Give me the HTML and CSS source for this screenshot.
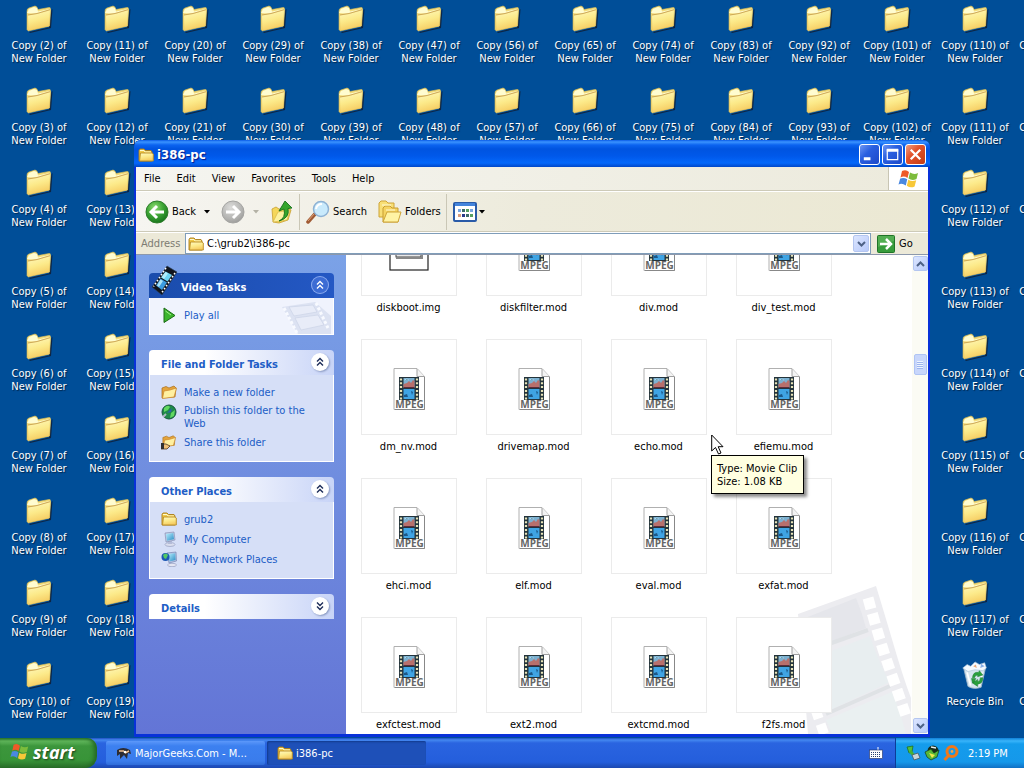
FILE: index.html
```html
<!DOCTYPE html>
<html lang="en">
<head>
<meta charset="utf-8">
<title>i386-pc</title>
<link rel="stylesheet" href="styles.css">
</head>
<body>
<svg class="defs" aria-hidden="true">
  <defs>
    <linearGradient id="gFold" x1="0" y1="0" x2="0.3" y2="1"><stop offset="0" stop-color="#fffac4"/><stop offset="0.55" stop-color="#fcea8a"/><stop offset="1" stop-color="#f6cc62"/></linearGradient>
    <radialGradient id="gGreen" cx="0.4" cy="0.3" r="0.75"><stop offset="0" stop-color="#8fdc72"/><stop offset="0.5" stop-color="#3da535"/><stop offset="1" stop-color="#14701a"/></radialGradient>
    <radialGradient id="gGray" cx="0.4" cy="0.3" r="0.75"><stop offset="0" stop-color="#dcdcda"/><stop offset="0.7" stop-color="#b2b2b0"/><stop offset="1" stop-color="#9a9a98"/></radialGradient>
    <linearGradient id="gScreen" x1="0" y1="0" x2="1" y2="1"><stop offset="0" stop-color="#b8f0ff"/><stop offset="1" stop-color="#2c8cc4"/></linearGradient>
  </defs>
  <symbol id="folder-big" viewBox="0 0 28 28">
    <path d="M4 27 L24 22.500 L26.500 5 L27.500 4 L26 23 L5 28Z" fill="#101c30" opacity=".8"/>
    <path d="M2 25 V6 Q2 3.500 4 3 L10 1 Q12 1 13 4.500 L24 2.500 Q25.500 2 25.500 4 L24 21Z" fill="#f3dc7c" stroke="#d8bc58" stroke-width=".6"/>
    <path d="M2 8 L4 4 L9 2 L12 3 L13 6.500 L25 4 V7 L12 9Z" fill="#fffcd0"/>
    <path d="M2.500 10 L12 8.500 L25.500 4.500 L24.500 21 L3 26Z" fill="url(#gFold)" stroke="#e5c55e" stroke-width=".6"/>
    <path d="M3 10 L12 8.500 L25 4.700" stroke="#b88c40" stroke-width=".6" fill="none"/>
  </symbol>
  <symbol id="folder" viewBox="0 0 16 16">
    <path d="M1 14 V3.500 L2 2 H6 L7.500 3.500 H13 L14 5 V14Z" fill="#f0c948" stroke="#a87a18" stroke-width=".9"/>
    <path d="M2 3.500 H6 L7 5 H13" stroke="#fffbd0" fill="none"/>
    <path d="M1.500 14 L2.500 6 H14 L15.300 7 V14Z" fill="url(#gFold)" stroke="#b98c24" stroke-width=".9"/>
  </symbol>
  <symbol id="folder-open" viewBox="0 0 16 16">
    <path d="M1 14 L1 4 L5 2.500 L8 4 L13 2 L15 4 L14 13Z" fill="#e4a43c" stroke="#a86c18" stroke-width=".7"/>
    <path d="M1.500 14.500 L3 7 L9 6 L15.500 4 L13 13Z" fill="#fff0a0" stroke="#c8842a" stroke-width=".7"/>
  </symbol>
  <symbol id="back" viewBox="0 0 24 24">
    <circle cx="12" cy="12" r="11" fill="url(#gGreen)" stroke="#2f7d2c"/>
    <path d="M19 12 H7 M12 6 L6 12 L12 18" fill="none" stroke="#fff" stroke-width="3"/>
  </symbol>
  <symbol id="fwd" viewBox="0 0 24 24">
    <circle cx="12" cy="12" r="11" fill="url(#gGray)" stroke="#a4a4a2"/>
    <path d="M5 12 H17 M12 6 L18 12 L12 18" fill="none" stroke="#fff" stroke-width="3"/>
  </symbol>
  <symbol id="up" viewBox="0 0 22 24">
    <path d="M2 22 L1 9 L5 7 L8 9 L17 8 L20 10 L17 20 L8 23Z" fill="#f5d75a" stroke="#c8a030" stroke-width=".8"/>
    <path d="M2 22 L7 12 L19 10 L16 20Z" fill="#fdf2a0" stroke="#d2b040" stroke-width=".6"/>
    <path d="M8 21 Q15 18 13 9 L8 11 L14 1 L21 8 L17 8.500 Q19 18 8 21Z" fill="#35a52c" stroke="#17701a" stroke-width=".9"/>
  </symbol>
  <symbol id="search" viewBox="0 0 24 24">
    <path d="M2 22 L9 14" stroke="#a05a34" stroke-width="3.500" stroke-linecap="round"/><path d="M2 21 L8 14" stroke="#dca078"/>
    <circle cx="15" cy="9" r="7.500" fill="#c9eafc" stroke="#8eb2d4" stroke-width="1.500"/>
    <path d="M10 9 Q11 4 16 4" stroke="#fff" stroke-width="2" fill="none"/>
  </symbol>
  <symbol id="folders" viewBox="0 0 24 24">
    <path d="M1 17 V3 L3 1 H8 L10 3 H16 V17Z" fill="#f8df76" stroke="#cda438"/>
    <path d="M5 22 V8 L7 6 H12 L14 8 H20 V22Z" fill="#f5d462" stroke="#c89c30"/>
    <path d="M5 22 L9 12 H23 L20 22Z" fill="#fff3a4" stroke="#cda438"/>
    <path d="M4 5 H13 M8 10 H17" stroke="#fffbd8"/>
  </symbol>
  <symbol id="views" viewBox="0 0 24 20">
    <rect x="1" y="1" width="22" height="18" rx="1" fill="#fff" stroke="#2a5ba8" stroke-width="2"/><path d="M2 2.500 H22" stroke="#4384dc" stroke-width="3"/>
    <path d="M5 7h3v3h-3z M17 7h3v3h-3z" fill="#78a6e0"/><path d="M9 7h3v3h-3z M13 12h3v3h-3z" fill="#3d6a68"/><path d="M13 7h3v3h-3z M17 12h3v3h-3z" fill="#56a060"/><path d="M5 12h3v3h-3z" fill="#d89c7c"/><path d="M9 12h3v3h-3z" fill="#283888"/>
  </symbol>
  <symbol id="flag" viewBox="0 0 22 20">
    <path d="M4 2 Q8 0 11 3 L9.500 9 Q6 6.500 2.500 8.500Z" fill="#ee5a28"/>
    <path d="M12 3.500 Q16 6 20 4 L18.500 10 Q14 12 10.500 9.500Z" fill="#7cbc3c"/>
    <path d="M2.200 9.500 Q6 8 9.200 10.300 L7.800 16.500 Q4 13.500 .5 15.500Z" fill="#4a88e0"/>
    <path d="M10.300 10.700 Q14 13 18.200 11.200 L16.600 17.500 Q12.500 19.500 8.800 16.800Z" fill="#f8c838"/>
  </symbol>
  <symbol id="go" viewBox="0 0 18 18">
    <rect x=".5" y=".5" width="17" height="17" rx="1" fill="#389c3c" stroke="#1f7428"/><path d="M1 1 H17 V6 L1 12Z" fill="#6cc068" opacity=".5"/>
    <path d="M3 9 H13 M9 4 L14 9 L9 14" fill="none" stroke="#fff" stroke-width="2.500"/>
  </symbol>
  <symbol id="chev-down" viewBox="0 0 9 6"><path d="M1 1 L4.500 4.500 L8 1" fill="none" stroke="#4d6185" stroke-width="2"/></symbol>
  <symbol id="chev-up" viewBox="0 0 9 6"><path d="M1 5 L4.500 1.500 L8 5" fill="none" stroke="#4d6185" stroke-width="2"/></symbol>
  <symbol id="tri" viewBox="0 0 6 4"><path d="M0 0 H6 L3 3.500Z" fill="currentColor"/></symbol>
  <symbol id="dbl-up" viewBox="0 0 18 18"><path d="M6 8.500 L9 5.500 L12 8.500 M6 12.500 L9 9.500 L12 12.500" fill="none" stroke="currentColor" stroke-width="1.400"/></symbol>
  <symbol id="dbl-down" viewBox="0 0 18 18"><path d="M6 5.500 L9 8.500 L12 5.500 M6 9.500 L9 12.500 L12 9.500" fill="none" stroke="currentColor" stroke-width="1.400"/></symbol>
  <symbol id="film" viewBox="0 0 28 32">
    <path d="M17 1 L27 7 L12 30 L2 22Z" fill="#10141c" stroke="#28405c" stroke-width=".6"/>
    <path d="M15.500 6.500 L22 10 L17.500 16.500 L11 12.500Z" fill="#6cd4f4"/><path d="M10.500 13.500 L17 17.500 L12 25 L6 20.500Z" fill="#3c9ce0"/>
    <path d="M11.500 12 L15.500 7 L18 8.500 L14 14Z M7 20.500 L10.500 14.500 L13 16 L9 22Z" fill="#c4f4fc" opacity=".8"/>
    <path d="M16 3 L3.500 21.500" stroke="#fff" stroke-width="1.600" stroke-dasharray="1.600 2"/><path d="M25 8 L12 27.500" stroke="#fff" stroke-width="1.600" stroke-dasharray="1.600 2"/>
  </symbol>
  <symbol id="play" viewBox="0 0 16 16"><path d="M3 1 L14 8.500 L3 15.500Z" fill="#3cb52c" stroke="#1a6a14"/><path d="M4.500 4 L10 8" stroke="#a0ec88"/></symbol>
  <symbol id="globe" viewBox="0 0 16 16">
    <circle cx="8" cy="8" r="7" fill="#1f8a48" stroke="#14553c"/><path d="M3 4 Q7 0 9 3 L7 6 L3 8Z M10 9 L14 6 L13 12 L9 14Z" fill="#62d860"/><path d="M6 9 L11 4 L10 8Z" fill="#2c60b0"/><path d="M2 13 L5 10" stroke="#b0b8c8" stroke-width="2"/>
  </symbol>
  <symbol id="share" viewBox="0 0 16 16"><use href="#folder-open" width="16" height="14"/><path d="M0 15 L1 10 L5 10 L9 12 L6 15Z" fill="#f0c078" stroke="#50381c" stroke-width=".8"/><path d="M0 9 H3 V15 H0Z" fill="#303030"/></symbol>
  <symbol id="computer" viewBox="0 0 16 16">
    <ellipse cx="9" cy="13.500" rx="5" ry="2" fill="#dadeee" stroke="#8a94b8" stroke-width=".6"/><path d="M7 10 H11 V13 H7Z" fill="#b4bcd8"/>
    <path d="M4 2 L13 1 L14 9 L5 11Z" fill="#c4cce4" stroke="#7a86ac" stroke-width=".6"/><path d="M5 3 L12.300 2 L13 8.300 L6 9.800Z" fill="url(#gScreen)"/>
  </symbol>
  <symbol id="network" viewBox="0 0 16 16">
    <ellipse cx="11" cy="14" rx="4.500" ry="1.700" fill="#e4e6f2" stroke="#8a94b8" stroke-width=".6"/>
    <path d="M6 2 L15 1 L15.500 10 L8 12Z" fill="#b8c4e4" stroke="#6c7aa8" stroke-width=".6"/><path d="M7 3 L14.200 2.200 L14.600 9 L8.500 10.600Z" fill="url(#gScreen)"/>
    <circle cx="4.500" cy="6" r="4" fill="#1c58b4"/><path d="M2 4 Q5 1 7 4 L5 8 L3 7Z" fill="#52c864"/>
  </symbol>
  <symbol id="mpeg" viewBox="0 0 32 42">
    <path d="M1 .5 H24 L31.500 8.500 V41.500 H1Z" fill="#fff" stroke="#b0b0b0"/><path d="M2 41.500 H31.500 V9" stroke="#888" fill="none"/>
    <path d="M24 1 V8.500 H31.500" fill="#f3f3f3" stroke="#a0a0a0"/>
    <rect x="6" y="9" width="20" height="23" fill="#24343c"/>
    <path d="M8 10.500 V32 M24 10.500 V32" stroke="#e8e4b8" stroke-width="2.200" stroke-dasharray="2 1.800"/>
    <rect x="10.500" y="10" width="11" height="10" fill="#7cb0d0"/><path d="M10.500 19 V16 L14 15 L16 13 L18 15 L20 12 L21.500 13 V19Z" fill="#b8706c"/><path d="M11 12 L14 11 L16 12" stroke="#a8dcf4"/>
    <path d="M10.500 19.500 H21.500" stroke="#5c2c3c"/>
    <rect x="10.500" y="21" width="11" height="10" fill="#3fa4e4"/><path d="M11 27 L14 26 L15 29 H11Z M18 23 L20 24 L19 27Z" fill="#1c5888"/>
    <text x="16.500" y="40" text-anchor="middle" class="mpeg-text">MPEG</text>
  </symbol>
  <symbol id="img" viewBox="0 0 40 42">
    <rect x="1" y="1" width="38" height="40" fill="#fff" stroke="#222" stroke-width="1.200"/><rect x="7" y="16" width="25" height="12" fill="#e8e8e8" stroke="#444"/>
    <path d="M11 23 h4 v3 h-4z M18 23 h4 v3 h-4z M25 23 h4 v3 h-4z" fill="#111"/><path d="M7 29 H33 V18" stroke="#888" fill="none" stroke-width="2"/>
  </symbol>
  <symbol id="bin" viewBox="0 0 30 32">
    <path d="M2 8 L27 8 L22 30 Q14 33 7 29Z" fill="#d4e4ee" stroke="#9ab4c8"/>
    <path d="M1 8 L6 4 L10 6 L15 1 L20 4 L26 2 L28 8 L24 11 L15 10 L7 12Z" fill="#f4faff" stroke="#a8c0d8" stroke-width=".7"/>
    <path d="M13 6 L16 4 L17 8Z" fill="#e8a878"/><path d="M22 3 L26 6 L21 8Z" fill="#88b0e8"/><path d="M6 13 L10 28 M23 13 L20 28" stroke="#fff" stroke-width="2"/>
    <path d="M12 19 Q13 12 19 13 L20 11 L24 16 L18 18 L18 16 Q15 16 14.500 19Z M24 19 Q24 26 18 26.500 L18 29 L12 25 L18 21 L18 23.500 Q21 23 21 19Z M11 20 L16 20 L14 24 L12 25Z" fill="#2aa03c" stroke="#187830" stroke-width=".5"/>
  </symbol>
</svg>

<main class="desktop">
  <div class="icons" id="icons"></div>

  <section class="window" aria-label="i386-pc">
    <header class="titlebar">
      <svg class="i16"><use href="#folder"/></svg>
      <h1 class="title">i386-pc</h1>
      <button class="cap" aria-label="Minimize"><svg viewBox="0 0 20 20"><path d="M4 14.500 H11" stroke="#fff" stroke-width="3"/></svg></button>
      <button class="cap" aria-label="Maximize"><svg viewBox="0 0 20 20"><path d="M4.500 5 H15.500 V15.500 H4.500Z" fill="none" stroke="#fff" stroke-width="1.300"/><path d="M4 5.500 H16" stroke="#fff" stroke-width="3"/></svg></button>
      <button class="cap close" aria-label="Close"><svg viewBox="0 0 20 20"><path d="M5 5 L15 15 M15 5 L5 15" stroke="#fff" stroke-width="2.400"/></svg></button>
    </header>
    <div class="client">
      <nav class="menubar">
        <button>File</button><button>Edit</button><button>View</button><button>Favorites</button><button>Tools</button><button>Help</button>
        <span class="throbber"><svg><use href="#flag"/></svg></span>
      </nav>
      <div class="toolbar">
        <button class="tool"><svg class="i24"><use href="#back"/></svg>Back<svg class="tri"><use href="#tri"/></svg></button>
        <button class="tool off" aria-label="Forward"><svg class="i24"><use href="#fwd"/></svg><svg class="tri"><use href="#tri"/></svg></button>
        <button class="tool" aria-label="Up"><svg class="i24"><use href="#up"/></svg></button>
        <span class="sep"></span>
        <button class="tool"><svg class="i24"><use href="#search"/></svg>Search</button>
        <button class="tool"><svg class="i24"><use href="#folders"/></svg>Folders</button>
        <span class="sep"></span>
        <button class="tool views" aria-label="Views"><svg class="i24"><use href="#views"/></svg><svg class="tri"><use href="#tri"/></svg></button>
      </div>
      <div class="address">
        <label for="addr">Address</label>
        <div class="combo">
          <svg class="i16"><use href="#folder"/></svg>
          <input id="addr" type="text" value="C:\grub2\i386-pc">
          <button class="chip" aria-label="Show addresses"><svg class="chev"><use href="#chev-down"/></svg></button>
        </div>
        <button class="go"><svg><use href="#go"/></svg>Go</button>
      </div>
      <div class="body">
        <aside class="side">
          <section class="group primary">
            <svg class="film"><use href="#film"/></svg>
            <h2><span>Video Tasks</span><button aria-label="Collapse Video Tasks"><svg><use href="#dbl-up"/></svg></button></h2>
            <div class="tasks">
              <svg class="strip" viewBox="0 0 52 32"><path d="M1 5 L34 0 L50 14 V32 H17Z" fill="#dce2f2"/><path d="M3 6 L16 31 M35 1 L47 26" stroke="#f8faff" stroke-width="3" stroke-dasharray="3 2"/><path d="M8 5 L32 3 L36 10 L13 14Z M14 16 L37 13 L43 23 L20 28Z" fill="#e8ecf8" stroke="#c8d0e4" stroke-width=".6"/></svg>
              <a href="#"><svg><use href="#play"/></svg><span>Play all</span></a>
            </div>
          </section>
          <section class="group">
            <h2><span>File and Folder Tasks</span><button aria-label="Collapse File and Folder Tasks"><svg><use href="#dbl-up"/></svg></button></h2>
            <div class="tasks">
              <a href="#"><svg><use href="#folder-open"/></svg><span>Make a new folder</span></a>
              <a href="#"><svg><use href="#globe"/></svg><span>Publish this folder to the Web</span></a>
              <a href="#"><svg><use href="#share"/></svg><span>Share this folder</span></a>
            </div>
          </section>
          <section class="group">
            <h2><span>Other Places</span><button aria-label="Collapse Other Places"><svg><use href="#dbl-up"/></svg></button></h2>
            <div class="tasks">
              <a href="#"><svg><use href="#folder"/></svg><span>grub2</span></a>
              <a href="#"><svg><use href="#computer"/></svg><span>My Computer</span></a>
              <a href="#"><svg><use href="#network"/></svg><span>My Network Places</span></a>
            </div>
          </section>
          <section class="group">
            <h2><span>Details</span><button aria-label="Expand Details"><svg><use href="#dbl-down"/></svg></button></h2>
          </section>
        </aside>
        <div class="view">
          <svg class="watermark" viewBox="0 0 120 148" aria-hidden="true">
            <path d="M6 28 L84 0 Q92 26 102 60 T119 112 V148 H16Z" fill="#ececf0"/>
            <path d="M8 34 L64 12 Q70 26 74 42 L18 64Z" fill="#e5e6eb"/>
            <path d="M21 72 L78 50 Q88 80 98 96 L34 126Z" fill="#e8eef0"/>
            <path d="M34 134 L100 106 Q108 124 114 148 H40Z" fill="#eaf0f1"/>
            <path d="M20 64 L76 44 M34 128 L98 100" stroke="#dfe2e5" stroke-width="4"/>
            <path d="M76 12 Q88 56 98 84 T114 130" fill="none" stroke="#fff" stroke-width="11" stroke-dasharray="11 5"/>
            <path d="M12 90 L32 148" fill="none" stroke="#fff" stroke-width="10" stroke-dasharray="11 6"/>
          </svg>
          <div class="files" id="files"></div>
        </div>
        <div class="scroll">
          <button class="chip" aria-label="Scroll up"><svg class="chev"><use href="#chev-up"/></svg></button>
          <div class="track"><div class="thumb"></div></div>
          <button class="chip" aria-label="Scroll down"><svg class="chev"><use href="#chev-down"/></svg></button>
        </div>
      </div>
    </div>
  </section>

  <div class="tooltip" role="tooltip">Type: Movie Clip<br>Size: 1.08 KB</div>
  <svg class="cursor" viewBox="0 0 13 21"><path d="M.7 1 V17 L4.500 13.500 L7.500 20 L10 19 L7.200 12.700 H12Z" fill="#fff" stroke="#000"/></svg>
</main>

<footer class="taskbar">
  <button class="start"><svg><use href="#flag"/></svg>start</button>
  <button class="task">
    <svg class="i16" viewBox="0 0 16 16"><path d="M1 5 Q7 1 14 5 L15 9 L12 8 L11 14 L8 10 L4 14 V9 L1 11Z" fill="#2c2c34"/><path d="M3 6 H8 M9 8 L13 6" stroke="#f0c090" stroke-width="1.500"/><circle cx="9" cy="7" r="1.300" fill="#fff"/></svg>
    MajorGeeks.Com - M...</button>
  <button class="task active"><svg class="i16"><use href="#folder"/></svg>i386-pc</button>
  <svg class="kbd" viewBox="0 0 14 12"><path d="M9 0 V3" stroke="#fff"/><rect x=".5" y="3" width="13" height="8.500" fill="#fff" stroke="#203060" stroke-width=".6"/><path d="M2 5.500 H12 M2 7.500 H12 M2 9.500 H12" stroke="#26406e" stroke-dasharray="1 1"/></svg>
  <div class="tray">
    <svg class="i16" viewBox="0 0 16 16"><path d="M2 2 L8 1 L7 7 L4 8Z" fill="#52c03c" stroke="#1c6818" stroke-width=".7"/><path d="M5 6 L11 13" stroke="#48b034" stroke-width="3"/><path d="M7 10 L13 8 L15 13 L9 15Z" fill="#c8d4d8" stroke="#485860" stroke-width=".8"/></svg>
    <svg class="i16" viewBox="0 0 16 16"><circle cx="9" cy="6" r="5.500" fill="#172c1c"/><path d="M1 7 L7 4 L10 8 L15 5 L13 12 L7 15 L3 12Z" fill="#58b838" stroke="#123818" stroke-width=".7"/><path d="M5 8 L11 10 L8 13Z" fill="#f4e84c"/><path d="M7 2 L12 3" stroke="#e8f0f0" stroke-width="1.500"/></svg>
    <svg class="i16" viewBox="0 0 16 16"><circle cx="9" cy="6.500" r="5" fill="none" stroke="#f07818" stroke-width="3"/><path d="M6 10 L1.500 15" stroke="#f07818" stroke-width="3"/><circle cx="9" cy="6.500" r="1.400" fill="#f8a040"/></svg>
    <time>2:19 PM</time>
  </div>
</footer>
<script src="script.js"></script>
</body>
</html>
```

FILE: styles.css
```css
* { box-sizing: border-box; }
html, body { height: 100%; }
body {
  margin: 0;
  display: flex;
  flex-direction: column;
  overflow: hidden;
  background: #004e98;
  color: #000;
  font: 11px/13px "DejaVu Sans Condensed", "Noto Sans", sans-serif;
}
button { border: 0; padding: 0; background: none; font: inherit; color: inherit; display: flex; align-items: center; }
a { color: inherit; text-decoration: none; }
svg { display: block; flex: none; }
.defs { position: absolute; width: 0; height: 0; }
.i16 { width: 16px; height: 16px; }
.i24 { width: 24px; height: 24px; }
.mpeg-text { font: bold 10px "Open Sans", sans-serif; fill: #666; }

.desktop { position: relative; flex: 1; min-height: 0; overflow: hidden; }
.icons { display: grid; grid-template-columns: repeat(14, 78px); grid-template-rows: repeat(9, 82px); }
.shortcut { display: flex; flex-direction: column; align-items: center; gap: 6px; padding-top: 5px; color: #fff; text-align: center; text-shadow: 1px 1px 1px #00264c; }
.shortcut svg { width: 28px; height: 28px; }
.shortcut span { width: 70px; white-space: nowrap; }

.window {
  position: absolute;
  inset: 140px 94px 1px 134px;
  display: flex;
  flex-direction: column;
  padding: 0 2px 3px;
  background: #0831d9;
  border-radius: 7px 7px 0 0;
  overflow: hidden;
}
.titlebar {
  display: flex;
  align-items: center;
  gap: 2px;
  height: 27px;
  flex: none;
  margin: 0 -2px;
  padding: 2px 4px 0 4px;
  background: linear-gradient(#0a5be8 0, #3a93ff 2px, #0b63f0 5px, #0054e0 9px, #0058ea 16px, #0468fa 23px, #0047c8 27px);
}
.title { flex: 1; margin: 0; padding-left: 1px; font: bold 13px/16px "DejaVu Sans Condensed", sans-serif; color: #fff; text-shadow: 1px 1px 1px #0a1883; }
.cap { width: 21px; height: 21px; border: 1px solid #fff; border-radius: 3px; background: linear-gradient(135deg, #6f97f4, #2a5fe0 40%, #1c48c8); }
.cap svg { width: 19px; height: 19px; }
.close { background: linear-gradient(135deg, #f0a084, #e2532c 40%, #c43c14); }
.client { flex: 1; min-height: 0; display: flex; flex-direction: column; background: #ece9d8; }

.menubar { display: flex; height: 24px; flex: none; background: linear-gradient(90deg, #f5f5f0, #eceadc); border-bottom: 1px solid #cdcab8; }
.menubar button { padding: 0 8px; }
.throbber { margin-left: auto; width: 40px; display: flex; align-items: center; justify-content: center; background: #fff; border-left: 1px solid #c8c5b4; }
.throbber svg { width: 22px; height: 20px; }

.toolbar { display: flex; align-items: center; height: 41px; flex: none; padding: 0 9px; border-top: 1px solid #fff; border-bottom: 1px solid #cdcab8; background: linear-gradient(90deg, #f6f5f1, #edebdc 50%, #ebe8d3); }
.tool { gap: 3px; margin-right: 11px; }
.tri { width: 6px; height: 4px; margin-left: 5px; }
.off { color: #b4b2a6; }
.sep { width: 1px; height: 36px; background: #cac7b6; margin: 0 6px 0 -6px; }
.views { gap: 0; }
.views .tri { margin-left: 2px; }

.address { display: flex; align-items: center; height: 22px; flex: none; padding: 0 0 0 5px; border-top: 1px solid #fff; background: #ece9d8; }
.address label { width: 44px; color: #7c7b72; }
.combo { flex: 1; min-width: 0; display: flex; align-items: center; height: 21px; padding: 1px 1px 1px 2px; background: #fff; border: 1px solid #7f9db9; }
.combo input { flex: 1; min-width: 0; border: 0; padding: 0 3px; background: none; font: inherit; outline: none; }
.chip { width: 15px; height: 15px; flex: none; justify-content: center; border: 1px solid #b4c6f0; border-radius: 2px; background: linear-gradient(135deg, #dce6ff, #b8cafa); }
.combo .chip { height: 17px; width: 16px; }
.chev { width: 9px; height: 6px; }
.go { gap: 4px; width: 57px; padding-left: 6px; }
.go svg { width: 18px; height: 18px; }

.body { flex: 1; min-height: 0; display: flex; background: #fff; border-top: 1px solid #8c98ac; }
.side { width: 210px; flex: none; display: flex; flex-direction: column; gap: 15px; padding: 18px 12px 18px 13px; overflow: hidden; background: linear-gradient(#7ba2e7, #6375d6); }
.group { position: relative; }
.group h2 { display: flex; align-items: center; justify-content: space-between; height: 25px; margin: 0; padding: 0 5px 0 12px; border-radius: 4px 4px 0 0; font: bold 11px/13px "DejaVu Sans Condensed", sans-serif; color: #215dc6; background: linear-gradient(90deg, #fff 30%, #c8d4f7); }
.group h2 span { padding-top: 3px; }
.group h2 button { width: 18px; height: 18px; border-radius: 50%; color: #1c2c58; background: #fff; box-shadow: 1px 1px 2px #8898c0; margin-bottom: 2px; }
.group h2 svg { width: 18px; height: 18px; }
.primary h2 { padding-left: 32px; color: #fff; background: linear-gradient(90deg, #1a4cac, #2458c4); }
.primary h2 button { color: #fff; background: #3c6cd4; box-shadow: inset 0 0 0 1px #88a8ec; }
.film { position: absolute; left: 1px; top: -8px; width: 28px; height: 32px; }
.tasks { position: relative; display: flex; flex-direction: column; gap: 4px; padding: 9px 11px 11px; border: solid #fff; border-width: 0 1px 1px; background: #d6dff7; color: #215dc6; }
.tasks a { position: relative; display: flex; align-items: center; gap: 7px; }
.tasks a svg { width: 16px; height: 16px; align-self: flex-start; }
.primary .tasks { background: #f0f3fd; }
.strip { position: absolute; right: 0; bottom: 0; width: 52px; height: 32px; }

.view { position: relative; flex: 1; min-width: 0; overflow: hidden; }
.watermark { position: absolute; right: 0; bottom: 0; width: 120px; height: 148px; }
.files { position: relative; display: grid; grid-template-columns: repeat(auto-fill, 125px); grid-auto-rows: 139px; margin-top: -55px; }
.file { display: flex; flex-direction: column; align-items: center; gap: 5px; }
.thumbnail { display: flex; align-items: center; justify-content: center; width: 96px; height: 96px; border: 1px solid #ebebeb; background: #fff; }
.mpeg { width: 32px; height: 42px; margin-top: 4px; }
.img { width: 40px; height: 42px; margin-top: 4px; }

.scroll { width: 16px; flex: none; display: flex; flex-direction: column; align-items: center; padding: 1px 0; background: #fbfbf4; }
.track { flex: 1; padding-top: 83px; }
.thumb { width: 13px; height: 21px; border: 1px solid #b0c4f4; border-radius: 2px; background: repeating-linear-gradient(#eef4ff 0 1px, #9cb4ee 1px 2px) center / 6px 8px no-repeat, #c8d6fb; }

.tooltip { position: absolute; left: 711px; top: 455px; padding: 6px 6px 5px 5px; border: 1px solid #000; background: #ffffe1; box-shadow: 3px 3px 3px rgba(0, 0, 0, .45); white-space: nowrap; }
.cursor { position: absolute; left: 711px; top: 434px; width: 13px; height: 21px; }

.taskbar { display: flex; align-items: center; height: 30px; flex: none; background: linear-gradient(#1f50c4 0, #4488f0 2px, #2a64e0 5px, #245edc 24px, #1c48b0 30px); color: #fff; }
.start { gap: 3px; width: 97px; height: 30px; padding: 0 0 2px 10px; border-radius: 0 10px 12px 0; background: linear-gradient(#2c7c2c 0, #62b85c 3px, #3c963c 8px, #389438 22px, #2a702a 30px); box-shadow: inset -3px 0 4px #246824; font: italic bold 18px/20px "Open Sans", sans-serif; text-shadow: 1px 1px 2px #1c401c; margin-right: 9px; }
.start svg { width: 20px; height: 20px; }
.task { gap: 3px; width: 159px; height: 24px; padding-left: 10px; margin-right: 2px; border-radius: 2px; background: linear-gradient(#5c98fa, #3c80f0 5px, #3a7cec 20px, #2f6cd8); white-space: nowrap; overflow: hidden; }
.active { background: #1e50b8; box-shadow: inset 1px 1px 2px #123a8c; }
.kbd { width: 14px; height: 12px; margin: 0 12px 0 auto; }
.tray { display: flex; align-items: center; gap: 3px; width: 129px; height: 30px; padding-left: 9px; border-left: 1px solid #0c3c98; background: linear-gradient(#1080d8 0, #38b4fa 3px, #149cec 6px, #1598ea 24px, #1070c4 30px); }
.tray time { margin-left: 6px; }
```

FILE: script.js
```js
const ROWS = 9;
const COLUMNS = 14;

// Columns behind the open folder window only hold icons in their first rows.
function rowsInColumn(col) {
  return col > 1 && col < 12 ? 2 : ROWS;
}

function shortcut(col, row) {
  const last = col === 12 && row === ROWS - 1;
  // The Recycle Bin takes one cell, so later copies shift back by one.
  const number = col * ROWS + row + (col > 12 ? 1 : 2);
  const el = document.createElement("a");
  el.href = "#";
  el.className = "shortcut";
  el.style.gridColumn = col + 1;
  el.style.gridRow = row + 1;
  el.innerHTML = last
    ? '<svg><use href="#bin"/></svg><span>Recycle Bin</span>'
    : `<svg><use href="#folder-big"/></svg><span>Copy (${number}) of<br>New Folder</span>`;
  return el;
}

const icons = document.getElementById("icons");
for (let col = 0; col < COLUMNS; col++) {
  for (let row = 0; row < rowsInColumn(col); row++) icons.append(shortcut(col, row));
}

const names = [
  "diskboot.img", "diskfilter.mod", "div.mod", "div_test.mod",
  "dm_nv.mod", "drivemap.mod", "echo.mod", "efiemu.mod",
  "ehci.mod", "elf.mod", "eval.mod", "exfat.mod",
  "exfctest.mod", "ext2.mod", "extcmd.mod", "f2fs.mod",
];
const files = document.getElementById("files");
for (const name of names) {
  const kind = name.endsWith(".img") ? "img" : "mpeg";
  const el = document.createElement("a");
  el.href = "#";
  el.className = "file";
  el.innerHTML = `<div class="thumbnail"><svg class="${kind}"><use href="#${kind}"/></svg></div><span>${name}</span>`;
  files.append(el);
}
```
